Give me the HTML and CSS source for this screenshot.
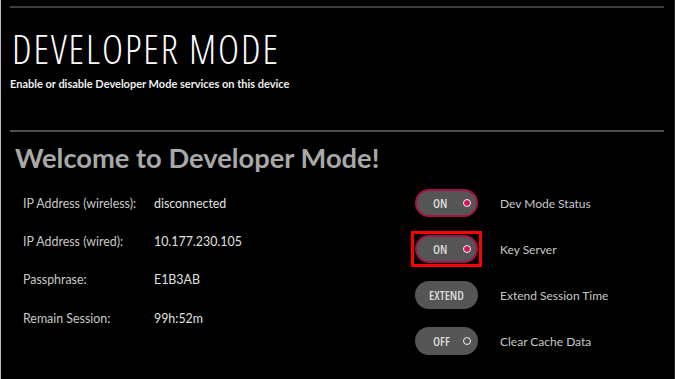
FILE: index.html
```html
<html>
    <head>
        <title>Developer Mode</title>
        <meta charset="UTF-8"><meta name="viewport"
            content="width=device-width, initial-scale=1.0">
        <link rel="stylesheet" href="styles.css">
</head><body>
        <div class="screen">
            <header>
                <div class="rule"></div>
                <h1 class="page-title">DEVELOPER MODE</h1>
                <p class="page-desc">Enable or disable Developer Mode services on this device</p>
                <div class="rule rule-lower"></div>
            </header>
            <main>
                <h2 class="welcome">Welcome to Developer Mode!</h2>
                <div class="panels">
                    <div class="info-list">
                        <span class="info-label">IP Address (wireless):</span>
                        <span class="info-value">disconnected</span>
                        <span class="info-label">IP Address (wired):</span>
                        <span class="info-value">10.177.230.105</span>
                        <span class="info-label">Passphrase:</span>
                        <span class="info-value">E1B3AB</span>
                        <span class="info-label">Remain Session:</span>
                        <span class="info-value">99h:52m</span>
                    </div>
                    <div class="controls">
                        <div class="control-row">
                            <div class="focus-box">
                                <button class="pill pill-on">ON <span class="dot"></span></button>
                            </div>
                            <span class="control-label">Dev Mode Status</span>
                        </div>
                        <div class="control-row">
                            <div class="focus-box selected">
                                <button class="pill pill-on">ON <span class="dot"></span></button>
                            </div>
                            <span class="control-label">Key Server</span>
                        </div>
                        <div class="control-row">
                            <div class="focus-box">
                                <button class="pill pill-text">EXTEND</button>
                            </div>
                            <span class="control-label">Extend Session Time</span>
                        </div>
                        <div class="control-row">
                            <div class="focus-box">
                                <button class="pill">OFF <span class="dot"></span></button>
                            </div>
                            <span class="control-label">Clear Cache Data</span>
                        </div>
                    </div>
                </div>
            </main>
        </div>
    </body></html>
```

FILE: styles.css
```css
body {
    margin: 0;
    padding: 0;
    background-color: #000;
    font-family: 'Lato', 'Open Sans', sans-serif;
    color: #ddd;
}
.screen {
    height: 379px;
    box-sizing: border-box;
    border-left: 1px solid #bbb;
    border-right: 1px solid #222;
    padding: 6px 10px 0 9px;
    overflow: hidden;
}
.rule {
    height: 2px;
    background-color: #3e3e3e;
}
.rule-lower {
    background-color: #505050;
    margin-top: 40px;
}
.page-title {
    font-family: 'Open Sans', sans-serif;
    font-stretch: 75%;
    font-weight: 300;
    font-size: 40px;
    line-height: 44px;
    margin: 19px 0 0 2px;
    color: #fff;
    letter-spacing: 1.9px;
}
.page-desc {
    font-size: 11px;
    font-weight: bold;
    margin: 6px 0 0 0;
    color: #eee;
}
.welcome {
    font-size: 27.3px;
    font-weight: bold;
    color: #a8a8a8;
    margin: 11px 0 0 5px;
    line-height: 30px;
}
.panels {
    display: flex;
    margin-top: 11px;
}
.info-list {
    display: grid;
    grid-template-columns: 131px auto;
    grid-auto-rows: 38.4px;
    align-items: center;
    width: 388px;
    padding-left: 13px;
    font-size: 12.4px;
}
.info-label {
    color: #c8c8c8;
}
.info-value {
    color: #e0e0e0;
}
.controls {
    display: flex;
    flex-direction: column;
    gap: 10px;
    padding-top: 1px;
}
.control-row {
    display: flex;
    align-items: center;
}
.focus-box {
    padding: 1px;
    border: 3px solid transparent;
}
.focus-box.selected {
    border-color: #ff0000;
}
.pill {
    width: 63px;
    height: 28px;
    border-radius: 14px;
    border: 2px solid #555;
    background-color: #555;
    color: #d8d8d8;
    font-family: 'Open Sans', sans-serif;
    font-stretch: 75%;
    font-size: 12.5px;
    font-weight: 600;
    display: flex;
    align-items: center;
    justify-content: space-between;
    padding: 0 5px 0 16px;
    box-sizing: border-box;
}
.pill-on {
    border-color: #a3124a;
}
.pill-text {
    justify-content: center;
    padding: 0;
}
.dot {
    width: 6px;
    height: 6px;
    border-radius: 50%;
    border: 1.5px solid #f4f4f4;
    background-color: #555;
}
.pill-on .dot {
    background-color: #d3175e;
}
.control-label {
    margin-left: 18px;
    font-size: 12px;
    color: #c8c8c8;
}
```
